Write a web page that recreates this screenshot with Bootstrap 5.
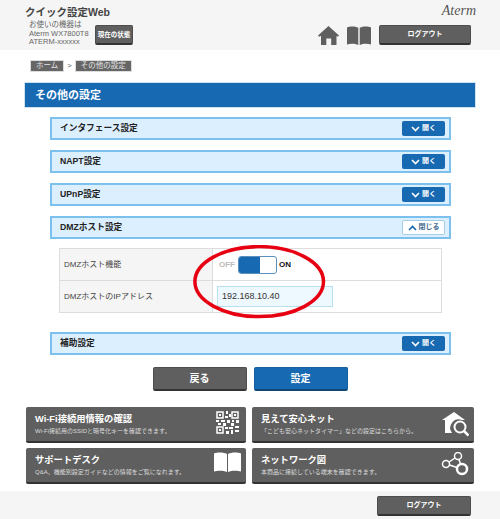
<!DOCTYPE html>
<html lang="ja">
<head>
  <meta charset="UTF-8">
  <title>その他の設定</title>
  <meta name="viewport" content="width=device-width, initial-scale=1">
  <link href="https://cdn.jsdelivr.net/npm/bootstrap@5.3.0/dist/css/bootstrap.min.css" rel="stylesheet">
  <style>
    body { width: 500px; height: 519px; overflow: hidden; font-family: "Liberation Sans", "Noto Sans CJK JP", sans-serif; color: #333; background: #fff; }
    .top-bar { height: 50px; background: #f5f5f5; padding: 4px 29px 0 25px; }
    .site-title { font-size: 10.5px; font-weight: 700; line-height: 16px; color: #444; margin-bottom: 1px; }
    .device-info { font-size: 7.5px; line-height: 8.5px; color: #666; padding-left: 4px; width: 70px; }
    .dark-btn { background: #5f5f5f; border: 1px solid #4d4d4d; border-bottom: 2px solid #333; border-radius: 2px; color: #fff; font-weight: 700; font-size: 7px; padding: 0; display: flex; align-items: center; justify-content: center; white-space: nowrap; }
    .status-btn { width: 38px; height: 20px; font-size: 6.5px; margin-top: 4px; }
    .logout-btn { width: 92px; height: 20px; }
    .logo-text { font-family: "Liberation Serif", serif; font-style: italic; font-size: 14px; line-height: 14px; color: #555; text-align: right; margin-right: -5px; height: 21px; }
    .crumbs { height: 33px; padding: 10px 0 0 30px; font-size: 7.5px; color: #555; gap: 3px; }
    .crumb-item { background: #666; color: #e4e4e4; height: 12px; line-height: 12px; padding: 0 6px; box-shadow: 0 0 0 1px #ddd inset; }
    .page-head { margin: 0 25px; height: 24px; background: #1769b2; color: #fff; font-size: 11px; font-weight: 700; line-height: 24px; padding-left: 10px; box-shadow: 0 0 0 1px #cfe0ee; }
    .acc-list { margin: 10px 49px 0 50px; }
    .acc-row { height: 23px; background: #dcefff; border: 2px solid #7cc0ee; padding: 0 4px 0 8px; margin-bottom: 10px; font-size: 8.7px; font-weight: 700; color: #222; }
    .acc-row.last-open { margin-bottom: 9px; }
    .open-btn { width: 43px; height: 15px; background: #1769b2; border-radius: 2px; color: #fff; font-size: 7px; font-weight: 700; gap: 2px; }
    .close-btn { background: #fff; border: 1px solid #a5cde6; color: #3d6a8c; }
    .detail-wrap { margin: 0 9px 19px; height: 65px; }
    .detail-table { border: 1px solid #ddd; height: 65px; font-size: 8px; color: #444; }
    .detail-row { height: 31px; }
    .detail-row + .detail-row { height: 32px; border-top: 1px solid #ddd; }
    .detail-label { width: 153px; background: #f5f5f5; border-right: 1px solid #ddd; padding-left: 4px; }
    .detail-val { padding-left: 6px; }
    .off-label { color: #bbb; font-size: 8px; font-weight: 700; width: 17px; margin-right: 2px; }
    .on-label { color: #111; font-size: 8px; font-weight: 700; }
    .switch-box { width: 39px; height: 18px; border: 1px solid #5b90bd; border-radius: 3px; background: #fff; overflow: hidden; margin-right: 2px; }
    .switch-fill { width: 21px; height: 100%; background: #1769b2; }
    .ip-box { width: 116px; height: 21px; margin-left: -2px; background: #eef8ff; border: 1px solid #b7dff2; font-size: 9px; line-height: 19px; padding-left: 4px; color: #333; }
    .red-ring { position: absolute; left: 134px; top: -3px; pointer-events: none; }
    .action-row { margin-top: 12px; gap: 7px; }
    .action-btn { width: 94px; height: 24px; border-radius: 2px; color: #fff; font-size: 10px; font-weight: 700; padding: 0; display: flex; align-items: center; justify-content: center; }
    .back-btn { background: #5f5f5f; border: 1px solid #4d4d4d; border-bottom: 2px solid #333; }
    .set-btn { background: #1769b2; border: 1px solid #155e9f; border-bottom: 2px solid #0e4778; }
    .tile-grid { margin: 16px 26px 0; display: grid; grid-template-columns: 220px 222px; column-gap: 6px; row-gap: 5px; }
    .tile-item { height: 36px; background: #5f5f5f; border-bottom: 2px solid #333; border-radius: 2px; color: #fff; padding: 6px 5px 0 9px; }
    .tile-item svg { margin-top: -2px; }
    .tile-name { font-size: 9.3px; font-weight: 700; line-height: 13px; }
    .tile-note { font-size: 6px; line-height: 10px; color: #ddd; white-space: nowrap; }
    .foot-bar { margin-top: 7px; height: 28px; background: #f5f5f5; padding: 5px 29px 0 0; }
    .foot-bar .logout-btn { width: 94px; }
    .qr-icon { margin-right: 2px; }
  </style>
</head>
<body>
  <div class="top-bar d-flex justify-content-between">
    <div>
      <div class="site-title">クイック設定Web</div>
      <div class="d-flex align-items-start">
        <div class="device-info">お使いの機器は<br>Aterm WX7800T8<br>ATERM-xxxxxx</div>
        <button class="dark-btn status-btn">現在の状態</button>
      </div>
    </div>
    <div>
      <div class="logo-text">Aterm</div>
      <div class="d-flex align-items-center gap-2">
        <svg width="21" height="19" viewBox="0 0 21 19"><path fill="#5f5f5f" d="M10.5 0 21 9.5l-1.2 1.3-1.3-1V19h-5.3v-6.5H8.3V19H3V9.8l-1.8 1L0 9.500z"/></svg>
        <svg width="24" height="19" viewBox="0 0 24 19"><path fill="#5f5f5f" d="M0 1.500C3 0 8 0 11.300 1.800V19C8 17.400 3 17.400 0 18.500zM24 1.500C21 0 16 0 12.700 1.800V19C16 17.400 21 17.400 24 18.500z"/></svg>
        <button class="dark-btn logout-btn">ログアウト</button>
      </div>
    </div>
  </div>

  <div class="crumbs d-flex align-items-start">
    <span class="crumb-item">ホーム</span>
    <span>&gt;</span>
    <span class="crumb-item">その他の設定</span>
  </div>

  <div class="page-head">その他の設定</div>

  <div class="acc-list">
    <div class="acc-row d-flex align-items-center justify-content-between">インタフェース設定
      <span class="open-btn d-flex align-items-center justify-content-center"><svg width="9" height="6" viewBox="0 0 9 6"><path d="M1 1l3.500 3.500L8 1" fill="none" stroke="#fff" stroke-width="1.600"/></svg>開く</span>
    </div>
    <div class="acc-row d-flex align-items-center justify-content-between">NAPT設定
      <span class="open-btn d-flex align-items-center justify-content-center"><svg width="9" height="6" viewBox="0 0 9 6"><path d="M1 1l3.500 3.500L8 1" fill="none" stroke="#fff" stroke-width="1.600"/></svg>開く</span>
    </div>
    <div class="acc-row d-flex align-items-center justify-content-between">UPnP設定
      <span class="open-btn d-flex align-items-center justify-content-center"><svg width="9" height="6" viewBox="0 0 9 6"><path d="M1 1l3.500 3.500L8 1" fill="none" stroke="#fff" stroke-width="1.600"/></svg>開く</span>
    </div>
    <div class="acc-row last-open d-flex align-items-center justify-content-between">DMZホスト設定
      <span class="open-btn close-btn d-flex align-items-center justify-content-center"><svg width="9" height="6" viewBox="0 0 9 6"><path d="M1 5l3.500-3.500L8 5" fill="none" stroke="#1769b2" stroke-width="1.600"/></svg>閉じる</span>
    </div>

    <div class="detail-wrap position-relative">
      <div class="detail-table">
        <div class="detail-row d-flex">
          <div class="detail-label d-flex align-items-center">DMZホスト機能</div>
          <div class="detail-val d-flex align-items-center">
            <span class="off-label">OFF</span>
            <div class="switch-box"><div class="switch-fill"></div></div>
            <span class="on-label">ON</span>
          </div>
        </div>
        <div class="detail-row d-flex">
          <div class="detail-label d-flex align-items-center">DMZホストのIPアドレス</div>
          <div class="detail-val d-flex align-items-center">
            <div class="ip-box">192.168.10.40</div>
          </div>
        </div>
      </div>
      <svg class="red-ring" width="134" height="75" viewBox="0 0 134 75"><ellipse cx="66.200" cy="36.600" rx="64.300" ry="35" fill="none" stroke="#e60012" stroke-width="3.500"/></svg>
    </div>

    <div class="acc-row d-flex align-items-center justify-content-between mb-0">補助設定
      <span class="open-btn d-flex align-items-center justify-content-center"><svg width="9" height="6" viewBox="0 0 9 6"><path d="M1 1l3.500 3.500L8 1" fill="none" stroke="#fff" stroke-width="1.600"/></svg>開く</span>
    </div>
  </div>

  <div class="action-row d-flex justify-content-center">
    <button class="action-btn back-btn">戻る</button>
    <button class="action-btn set-btn">設定</button>
  </div>

  <div class="tile-grid">
    <div class="tile-item d-flex justify-content-between">
      <div>
        <div class="tile-name">Wi-Fi接続用情報の確認</div>
        <div class="tile-note">Wi-Fi接続用のSSIDと暗号化キーを確認できます。</div>
      </div>
      <svg class="qr-icon" width="23" height="23" viewBox="0 0 23 23"><g fill="none" stroke="#fff" stroke-width="1.500"><rect x="1" y="1" width="6" height="6"/><rect x="16" y="1" width="6" height="6"/><rect x="1" y="16" width="6" height="6"/></g><path fill="#fff" d="M3 3h2v2H3zM18 3h2v2h-2zM3 18h2v2H3zM10 0h2v3h-2zM13 3h2v3h-2zM9 5h3v2H9zM0 9h3v2H0zM5 9h4v2H5zM11 9h3v3h-3zM16 9h2v2h-2zM20 9h3v3h-3zM2 12h3v2H2zM7 12h3v3H7zM15 12h3v3h-3zM9 16h3v2H9zM13 16h4v2h-4zM19 15h4v2h-4zM10 20h3v3h-3zM15 19h2v4h-2zM19 19h4v2h-4z"/></svg>
    </div>
    <div class="tile-item d-flex justify-content-between">
      <div>
        <div class="tile-name">見えて安心ネット</div>
        <div class="tile-note">「こども安心ネットタイマー」などの設定はこちらから。</div>
      </div>
      <svg width="27" height="26" viewBox="0 0 27 26"><path fill="#fff" d="M12 1 0 9h3v13h7a8.500 8.500 0 0 1 10-13h3z"/><circle cx="18" cy="16" r="5.500" fill="none" stroke="#fff" stroke-width="2"/><path d="M22 20 26.500 24.500" stroke="#fff" stroke-width="2.500"/></svg>
    </div>
    <div class="tile-item d-flex justify-content-between">
      <div>
        <div class="tile-name">サポートデスク</div>
        <div class="tile-note">Q&amp;A、機能別設定ガイドなどの情報をご覧になれます。</div>
      </div>
      <svg width="27" height="20" viewBox="0 0 27 20"><path fill="#fff" d="M0 1.500C3.500 0 9.500 0 13 2v18C9.500 18.300 3.500 18.300 0 19.500zM27 1.500C23.500 0 17.500 0 14 2v18c3.500-1.700 9.500-1.700 13-.5z"/></svg>
    </div>
    <div class="tile-item d-flex justify-content-between">
      <div>
        <div class="tile-name">ネットワーク図</div>
        <div class="tile-note">本商品に接続している端末を確認できます。</div>
      </div>
      <svg width="28" height="26" viewBox="0 0 28 26"><g fill="none" stroke="#fff"><circle cx="5" cy="12" r="3.500" stroke-width="1.500"/><circle cx="17" cy="4" r="3.500" stroke-width="1.500"/><circle cx="21" cy="17" r="5" stroke-width="2.500"/><path d="M8 10l6-4M8.500 13l7.500 2.500M18 7.500l1.500 4.500" stroke-width="1.500"/></g></svg>
    </div>
  </div>

  <div class="foot-bar d-flex justify-content-end">
    <button class="dark-btn logout-btn">ログアウト</button>
  </div>

  <script src="https://cdn.jsdelivr.net/npm/bootstrap@5.3.0/dist/js/bootstrap.bundle.min.js"></script>
</body>
</html>
